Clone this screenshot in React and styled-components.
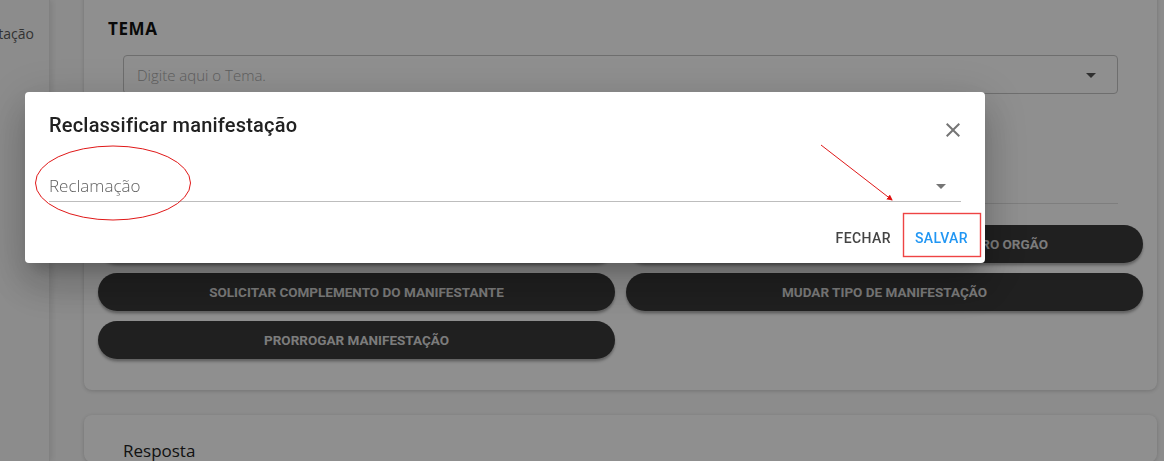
import React from 'react'
import styled, { createGlobalStyle } from 'styled-components'

const Global = createGlobalStyle`
  html, body { margin: 0; padding: 0; background: #fafafa; overflow: hidden; }
  body { font-family: "Open Sans", "Liberation Sans", sans-serif; }
  * { box-sizing: border-box; }
`

const ArrowDrop = ({ color = '#757575' }) => (
  <svg width="24" height="24" viewBox="0 0 24 24"><path d="M7 10l5 5 5-5z" fill={color} /></svg>
)

const CloseIcon = () => (
  <svg width="24" height="24" viewBox="0 0 24 24">
    <path fill="#757575" d="M19 6.41L17.59 5 12 10.59 6.41 5 5 6.41 10.59 12 5 17.59 6.41 19 12 13.41 17.59 19 19 17.59 13.41 12z" />
  </svg>
)

function App() {
  return (
    <>
      <Global />
      <Page>
        <Sidebar>
          <NavText>tação</NavText>
        </Sidebar>
        <Main>
          <Card>
            <Label>TEMA</Label>
            <Outlined>
              <Placeholder>Digite aqui o Tema.</Placeholder>
              <ArrowDrop color="#555" />
            </Outlined>
            <Hidden />
            <Divider />
            <ButtonGrid>
              <ActionButton>RESPONDER MANIFESTAÇÃO</ActionButton>
              <ActionButton>ENCAMINHAR MANIFESTAÇÃO PARA OUTRO ORGÃO</ActionButton>
              <ActionButton>SOLICITAR COMPLEMENTO DO MANIFESTANTE</ActionButton>
              <ActionButton>MUDAR TIPO DE MANIFESTAÇÃO</ActionButton>
              <ActionButton>PRORROGAR MANIFESTAÇÃO</ActionButton>
            </ButtonGrid>
          </Card>
          <Card2>
            <SectionTitle>Resposta</SectionTitle>
          </Card2>
        </Main>
      </Page>
      <Backdrop />
      <Dialog>
        <DialogHead>
          <DialogTitle>Reclassificar manifestação</DialogTitle>
          <CloseBtn><CloseIcon /></CloseBtn>
        </DialogHead>
        <DialogContent>
          <UnderSelect>
            <SelectValue>Reclamação</SelectValue>
            <ArrowDrop />
          </UnderSelect>
        </DialogContent>
        <DialogActions>
          <TextButton>FECHAR</TextButton>
          <TextButton primary>SALVAR</TextButton>
        </DialogActions>
        <Marks width="960" height="171" viewBox="0 0 960 171">
          <defs>
            <marker id="head" markerWidth="6" markerHeight="6" refX="5" refY="3" orient="auto">
              <path d="M0,0 L6,3 L0,6 z" fill="#e01010" />
            </marker>
          </defs>
          <ellipse cx="88" cy="91" rx="77.5" ry="37" fill="none" stroke="#e01818" strokeWidth="1" />
          <line x1="796" y1="53" x2="867" y2="108" stroke="#e01818" strokeWidth="1" markerEnd="url(#head)" />
          <rect x="878.5" y="121.5" width="77" height="43" fill="none" stroke="#ee4444" strokeWidth="1.4" />
        </Marks>
      </Dialog>
    </>
  )
}

export default App

const Page = styled.div`
  display: flex;
  width: 1164px;
  height: 461px;
  overflow: hidden;
`
const Sidebar = styled.div`
  width: 50px;
  flex-shrink: 0;
  background: #fafafa;
  border-right: 1px solid #e6e6e6;
  box-shadow: 2px 0 6px rgba(0,0,0,0.1);
  overflow: hidden;
  padding-top: 24px;
  display: flex;
  justify-content: flex-end;
`
const NavText = styled.div`
  font-size: 14px;
  color: #5a5a5a;
  margin-right: 15px;
  white-space: nowrap;
`
const Main = styled.div`
  flex: 1;
  padding: 0 7px 0 34px;
  display: flex;
  flex-direction: column;
  gap: 25px;
`
const Card = styled.div`
  margin-top: -12px;
  background: #fff;
  border-radius: 8px;
  box-shadow: 0 1px 4px rgba(0,0,0,0.18);
  padding: 31px 14px 31px;
`
const Card2 = styled(Card)`
  margin-top: 0;
  padding: 25px 39px 0;
  height: 60px;
`
const Label = styled.div`
  font-weight: 700;
  font-size: 17px;
  letter-spacing: 0.6px;
  color: #111;
  margin-left: 10px;
  line-height: 20px;
`
const Outlined = styled.div`
  margin: 16px 25px 0;
  height: 39px;
  border: 1px solid #c4c4c4;
  border-radius: 4px;
  display: flex;
  align-items: center;
  justify-content: space-between;
  padding: 0 14px 0 13px;
`
const Placeholder = styled.span`
  font-size: 15px;
  font-weight: 300;
  color: #a8a8a8;
`
const Hidden = styled.div`
  height: 109px;
`
const Divider = styled.div`
  margin: 0 25px;
  height: 1px;
  background: #e0e0e0;
`
const ButtonGrid = styled.div`
  display: grid;
  grid-template-columns: 1fr 1fr;
  column-gap: 11px;
  row-gap: 10px;
  margin-top: 21px;
`
const ActionButton = styled.div`
  height: 38px;
  border-radius: 19px;
  background: #393939;
  color: #dedede;
  font-family: Roboto, "Liberation Sans", sans-serif;
  font-weight: 700;
  font-size: 13.5px;
  white-space: nowrap;
  display: flex;
  align-items: center;
  justify-content: center;
  box-shadow: 0 3px 3px rgba(0,0,0,0.2), 0 2px 2px rgba(0,0,0,0.14);
`
const SectionTitle = styled.div`
  font-size: 17px;
  line-height: 22px;
  color: #222;
`
const Backdrop = styled.div`
  position: fixed;
  inset: 0;
  background: rgba(0,0,0,0.44);
`
const Dialog = styled.div`
  position: fixed;
  left: 25px;
  top: 92px;
  width: 960px;
  height: 171px;
  background: #fff;
  border-radius: 4px;
  box-shadow: 0 11px 15px -7px rgba(0,0,0,0.2), 0 24px 38px 3px rgba(0,0,0,0.14), 0 9px 46px 8px rgba(0,0,0,0.12);
  display: flex;
  flex-direction: column;
`
const DialogHead = styled.div`
  display: flex;
  align-items: center;
  justify-content: space-between;
  padding: 16px 20px 0 24px;
`
const DialogTitle = styled.h2`
  margin: 0;
  font-family: Roboto, "Liberation Sans", sans-serif;
  font-weight: 500;
  font-size: 20px;
  letter-spacing: 0.2px;
  line-height: 32px;
  color: #212121;
`
const CloseBtn = styled.div`
  margin-top: 10px;
  width: 24px;
  height: 24px;
`
const DialogContent = styled.div`
  padding: 0 24px;
  margin-top: 28px;
`
const UnderSelect = styled.div`
  height: 32px;
  border-bottom: 1px solid #bdbdbd;
  display: flex;
  align-items: center;
  justify-content: space-between;
  padding-right: 8px;
`
const SelectValue = styled.span`
  font-size: 17px;
  font-weight: 300;
  color: #5e5e5e;
`
const DialogActions = styled.div`
  display: flex;
  justify-content: flex-end;
  gap: 8px;
  padding: 18px 9px 0;
`
const TextButton = styled.div`
  height: 36px;
  min-width: 64px;
  padding: 0 8px;
  display: flex;
  align-items: center;
  justify-content: center;
  font-family: Roboto, "Liberation Sans", sans-serif;
  font-weight: 500;
  font-size: 14px;
  letter-spacing: 0.4px;
  color: ${p => (p.primary ? '#2196f3' : '#444')};
`
const Marks = styled.svg`
  position: absolute;
  left: 0;
  top: 0;
  pointer-events: none;
  overflow: visible;
`
